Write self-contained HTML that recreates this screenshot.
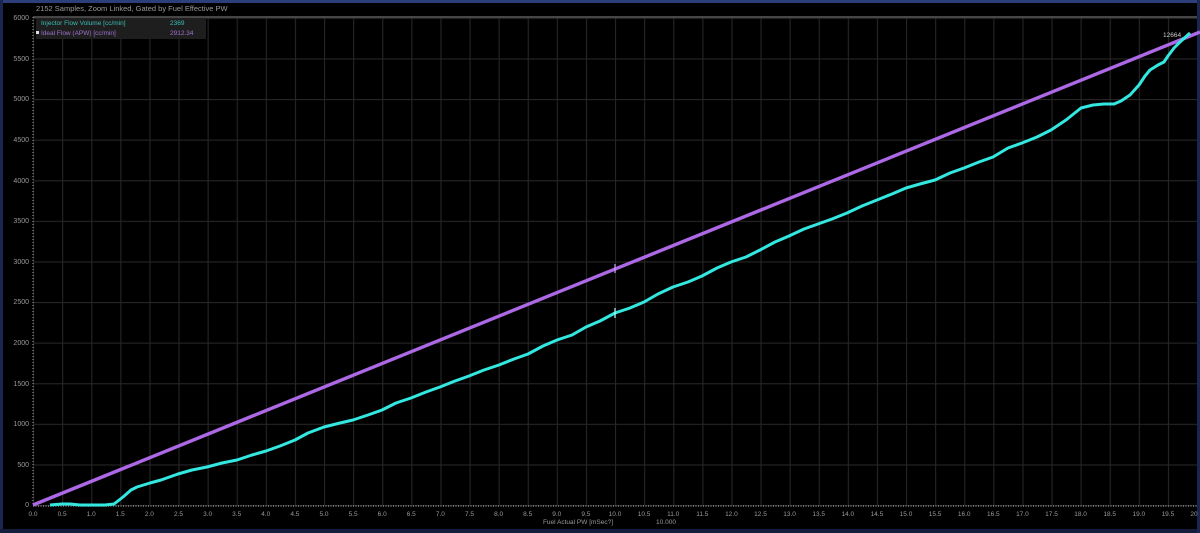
<!DOCTYPE html>
<html><head><meta charset="utf-8"><style>
html,body{margin:0;padding:0;background:#000;}
svg{display:block}
text{font-family:"Liberation Sans",sans-serif;}
</style></head><body>
<svg width="1200" height="533" viewBox="0 0 1200 533" xmlns="http://www.w3.org/2000/svg">
<defs>
<pattern id="g" patternUnits="userSpaceOnUse" x="33" y="17.8" width="29.1" height="40.6">
<path d="M0.5 0V40.6M0 0.5H29.1" stroke="#262626" stroke-width="1.2" fill="none"/>
</pattern>
</defs>
<rect width="1200" height="533" fill="#000"/>
<rect x="0" y="0" width="1200" height="3" fill="#2c3f7a"/>
<rect x="0" y="0" width="3" height="533" fill="#1a2650"/>
<rect x="0" y="529" width="1200" height="4" fill="#141d3c"/>
<rect x="1197" y="0" width="3" height="533" fill="#1a2650"/>
<rect x="33" y="17" width="1164" height="489" fill="url(#g)"/>
<line x1="33" y1="17" x2="1197" y2="17" stroke="#5a5a5a" stroke-width="1.5"/>
<line x1="33" y1="17" x2="33" y2="506" stroke="#8a8a8a" stroke-width="1.2" stroke-dasharray="1 2"/>
<line x1="33" y1="506" x2="1197" y2="506" stroke="#8a8a8a" stroke-width="1.5" stroke-dasharray="1 1.5"/>
<text x="36" y="11" font-size="7.5" fill="#9a9a9a">2152 Samples, Zoom Linked, Gated by Fuel Effective PW</text>
<rect x="36" y="19" width="170" height="20" fill="#1e1e1e"/>
<text x="41" y="25" font-size="6.5" fill="#3bbfb5">Injector Flow Volume [cc/min]</text>
<text x="170" y="25" font-size="6.5" fill="#3bbfb5">2369</text>
<rect x="36" y="31" width="3" height="3" fill="#ddd"/>
<text x="41" y="35" font-size="6.5" fill="#a070d0">Ideal Flow (APW) [cc/min]</text>
<text x="170" y="35" font-size="6.5" fill="#a070d0">2912.34</text>
<g font-size="7" fill="#9a9a9a" text-anchor="end">
<text x="29" y="507">0</text><text x="29" y="467">500</text><text x="29" y="426">1000</text><text x="29" y="386">1500</text><text x="29" y="345">2000</text><text x="29" y="304">2500</text><text x="29" y="264">3000</text><text x="29" y="223">3500</text><text x="29" y="183">4000</text><text x="29" y="142">4500</text><text x="29" y="101">5000</text><text x="29" y="61">5500</text><text x="29" y="20">6000</text>
</g>
<g font-size="6.5" fill="#9a9a9a" text-anchor="middle">
<text x="33" y="516">0.0</text><text x="62.1" y="516">0.5</text><text x="91.2" y="516">1.0</text><text x="120.3" y="516">1.5</text><text x="149.4" y="516">2.0</text><text x="178.5" y="516">2.5</text><text x="207.6" y="516">3.0</text><text x="236.7" y="516">3.5</text><text x="265.8" y="516">4.0</text><text x="294.9" y="516">4.5</text><text x="324" y="516">5.0</text><text x="353.1" y="516">5.5</text><text x="382.2" y="516">6.0</text><text x="411.3" y="516">6.5</text><text x="440.4" y="516">7.0</text><text x="469.5" y="516">7.5</text><text x="498.6" y="516">8.0</text><text x="527.7" y="516">8.5</text><text x="556.8" y="516">9.0</text><text x="585.9" y="516">9.5</text><text x="615" y="516">10.0</text><text x="644.1" y="516">10.5</text><text x="673.2" y="516">11.0</text><text x="702.3" y="516">11.5</text><text x="731.4" y="516">12.0</text><text x="760.5" y="516">12.5</text><text x="789.6" y="516">13.0</text><text x="818.7" y="516">13.5</text><text x="847.8" y="516">14.0</text><text x="876.9" y="516">14.5</text><text x="906" y="516">15.0</text><text x="935.1" y="516">15.5</text><text x="964.2" y="516">16.0</text><text x="993.3" y="516">16.5</text><text x="1022.4" y="516">17.0</text><text x="1051.5" y="516">17.5</text><text x="1080.6" y="516">18.0</text><text x="1109.7" y="516">18.5</text><text x="1138.8" y="516">19.0</text><text x="1167.9" y="516">19.5</text><text x="1194" y="516">20</text>
</g>
<text x="578" y="524" font-size="6.5" fill="#9a9a9a" text-anchor="middle">Fuel Actual PW [mSec?]</text>
<text x="666" y="524" font-size="6.5" fill="#9a9a9a" text-anchor="middle">10.000</text>
<line x1="33" y1="505" x2="1200" y2="32" stroke="#ad68e6" stroke-width="3.4"/>
<polyline fill="none" stroke="#33e8e0" stroke-width="3" stroke-linejoin="round" points="50,505 62,504 70,504 80,505 91,505 105,505 114,504 123,497 131,490 137,487 150,483 161,480 178,474 192,470 207,467 222,463 237,460 252,455 266,451 280,446 295,440 308,433 324,427 340,423 353,420 368,415 382,410 396,403 411,398 426,392 440,387 455,381 469,376 484,370 499,365 514,359 528,354 543,346 557,340 572,335 586,327 600,321 615,313 630,308 644,302 658,294 673,287 688,282 702,276 717,268 731,262 746,257 760,250 775,242 789,236 804,229 818,224 832,219 847,213 862,206 877,200 892,194 906,188 920,184 935,180 950,173 964,168 979,162 993,157 1008,148 1022,143 1037,137 1051,130 1066,120 1081,108 1093,105 1104,104 1114,104 1121,101 1130,95 1139,85 1145,76 1150,70 1158,65 1164,62 1168,56 1174,48 1180,42 1190,33"/>
<line x1="615" y1="264" x2="615" y2="273" stroke="#c9a0f0" stroke-width="1.2"/>
<line x1="615" y1="308" x2="615" y2="318" stroke="#b0fff8" stroke-width="1.2"/>
<text x="1163" y="37" font-size="6.5" fill="#ccc">12664</text>
</svg>
</body></html>
